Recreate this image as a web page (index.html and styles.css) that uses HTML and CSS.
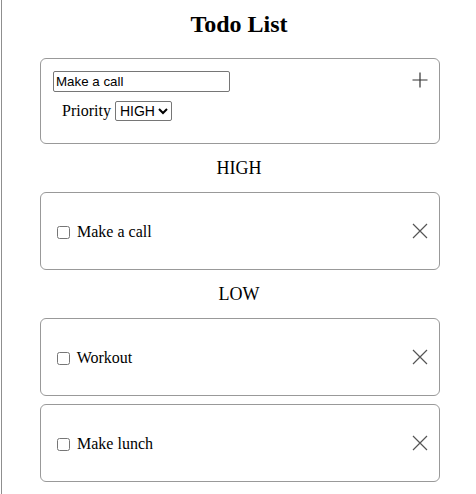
FILE: index.html
```html
<!DOCTYPE html>
<html lang="en">
<head>
	<meta charset="UTF-8">
	<title>Todo List</title>
	<link rel="stylesheet" href="styles.css">
</head>
<body>
	<div class="app">
		<h2 class="title">Todo List</h2>

		<div class="card add-card">
			<div class="add-form">
				<input class="add-input" type="text" value="Make a call">
				<div class="priority">
					<label for="priority">Priority</label>
					<select id="priority" class="priority-select">
						<option>HIGH</option>
						<option>LOW</option>
					</select>
				</div>
			</div>
			<button class="icon-btn add-btn" type="button">
				<svg width="16" height="16" viewBox="0 0 16 16"><path d="M8 0.5V15.5M0.5 8H15.5" stroke="#333" stroke-width="1.2" fill="none"/></svg>
			</button>
		</div>

		<h3 class="group-title">HIGH</h3>
		<div class="card todo">
			<label class="todo-label"><input type="checkbox"> Make a call</label>
			<button class="icon-btn" type="button">
				<svg width="16" height="16" viewBox="0 0 16 16"><path d="M1 1L15 15M15 1L1 15" stroke="#555" stroke-width="1.2" fill="none"/></svg>
			</button>
		</div>

		<h3 class="group-title">LOW</h3>
		<div class="card todo">
			<label class="todo-label"><input type="checkbox"> Workout</label>
			<button class="icon-btn" type="button">
				<svg width="16" height="16" viewBox="0 0 16 16"><path d="M1 1L15 15M15 1L1 15" stroke="#555" stroke-width="1.2" fill="none"/></svg>
			</button>
		</div>
		<div class="card todo">
			<label class="todo-label"><input type="checkbox"> Make lunch</label>
			<button class="icon-btn" type="button">
				<svg width="16" height="16" viewBox="0 0 16 16"><path d="M1 1L15 15M15 1L1 15" stroke="#555" stroke-width="1.2" fill="none"/></svg>
			</button>
		</div>
	</div>
</body>
</html>
```

FILE: styles.css
```css
* {
	box-sizing:border-box;
}
html,body {
	margin:0;
	padding:0;
	height:100%;
}
body {
	font-family:"Liberation Serif", "Times New Roman", serif;
	font-size:16px;
	color:#000;
	background:#fff;
}
.app {
	min-height:100%;
	margin-left:1px;
	border-left:1px solid #8f8f8f;
	overflow:hidden;
}
.title {
	margin:11px 0 20px;
	font-size:24px;
	font-weight:bold;
	text-align:center;
}
.card {
	display:flex;
	justify-content:space-between;
	width:400px;
	margin:0 0 0 38px;
	border:1px solid #999;
	border-radius:6px;
	background:#fff;
}
.add-card {
	height:86px;
	padding:12px 11px 12px 12px;
	align-items:flex-start;
}
.add-input {
	display:block;
	width:177px;
	height:21px;
	padding:1px 2px;
	border:1px solid #767676;
	border-radius:2px;
	font-family:"Liberation Sans", Arial, sans-serif;
	font-size:13.33px;
	color:#000;
}
.priority {
	display:flex;
	align-items:baseline;
	gap:4px;
	margin-top:9px;
	padding-left:9px;
}
.priority-select {
	height:20px;
	font-family:"Liberation Sans", Arial, sans-serif;
	font-size:14px;
	border:1px solid #767676;
	border-radius:2px;
	background:#fff;
}
.icon-btn {
	display:block;
	padding:0;
	margin:0;
	border:0;
	background:none;
	cursor:pointer;
	line-height:0;
}
.add-btn {
	margin-top:1px;
}
.group-title {
	margin:14px 0 13px;
	font-size:18px;
	font-weight:normal;
	text-align:center;
}
.todo {
	height:78px;
	padding:0 11px 0 12px;
	align-items:center;
}
.todo + .todo {
	margin-top:8px;
}
.todo-label {
	display:block;
	padding-top:2px;
}
.todo-label input {
	margin:3px 3px 3px 4px;
	vertical-align:-2px;
}
```
